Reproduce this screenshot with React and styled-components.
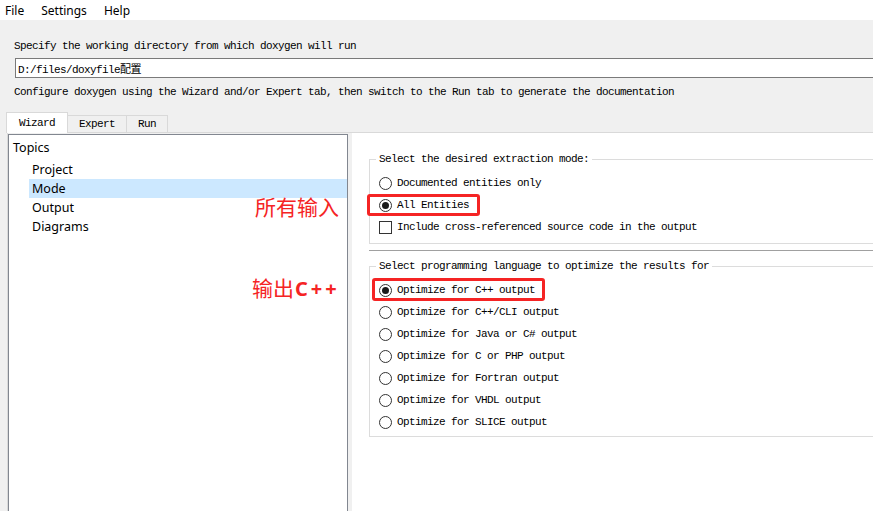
import React from 'react';
import styled, { createGlobalStyle } from 'styled-components';

const mono = `'Liberation Mono', 'Noto Sans CJK SC', monospace`;
const ui = `'Noto Sans', 'Noto Sans CJK SC', sans-serif`;

const GlobalStyle = createGlobalStyle`
  html, body {
    margin: 0;
    padding: 0;
    background: #f0f0f0;
    overflow: hidden;
  }
`;

const Window = styled.div`
  width: 873px;
  height: 511px;
  overflow: hidden;
  display: flex;
  flex-direction: column;
  background: #f0f0f0;
`;

const MenuBar = styled.nav`
  flex: none;
  height: 20px;
  background: #fff;
  display: flex;
  align-items: center;
  gap: 17px;
  padding-left: 5px;
  font: 12px ${ui};
  color: #000;
`;

const Header = styled.header`
  display: flex;
  flex-direction: column;
  padding: 19px 0 0 14px;
  font-family: ${mono};
  font-size: 11px;
  letter-spacing: -0.6px;
  color: #000;
`;

const Label = styled.div`
  height: 14px;
  line-height: 14px;
  white-space: nowrap;
  margin-top: ${(p) => p.$gap || 0}px;
`;

const PathField = styled.input`
  box-sizing: border-box;
  height: 20px;
  margin: 5px -30px 0 1px;
  padding: 0 2px;
  border: 1px solid #7a7a7a;
  background: #fff;
  font: inherit;
  letter-spacing: inherit;
  color: #000;
  outline: none;
`;

const TabBar = styled.div`
  display: flex;
  align-items: flex-end;
  height: 20px;
  margin: 14px 0 -1px 6px;
  position: relative;
  z-index: 1;
  font-family: ${mono};
  font-size: 11px;
  letter-spacing: -0.6px;
`;

const Tab = styled.div`
  box-sizing: border-box;
  height: ${(p) => (p.$active ? 21 : 18)}px;
  padding: 0 ${(p) => p.$pad}px;
  margin-left: ${(p) => (p.$first ? 0 : -1)}px;
  display: flex;
  align-items: center;
  justify-content: center;
  border: 1px solid #d9d9d9;
  border-bottom: ${(p) => (p.$active ? 'none' : '1px solid #d9d9d9')};
  background: ${(p) => (p.$active ? '#fff' : '#f0f0f0')};
  color: #000;
`;

const Pane = styled.div`
  flex: 1;
  display: flex;
  margin-left: 7px;
  border-top: 1px solid #d9d9d9;
  border-left: 1px solid #d9d9d9;
  min-height: 0;
`;

const Tree = styled.div`
  position: relative;
  box-sizing: border-box;
  flex: none;
  width: 340px;
  margin-top: 1px;
  padding-top: 3px;
  border: 1px solid #828790;
  border-bottom: none;
  background: #fff;
  font: 12.5px ${ui};
  color: #000;
`;

const TreeRoot = styled.div`
  height: 22px;
  line-height: 19px;
  padding-left: 4px;
`;

const TreeItem = styled.div`
  height: 19px;
  line-height: 19px;
  margin-left: 20px;
  padding-left: 3px;
  background: ${(p) => (p.$selected ? '#cce8ff' : 'transparent')};
`;

const Note = styled.span`
  position: absolute;
  left: ${(p) => p.$x}px;
  top: ${(p) => p.$y}px;
  font: 21px/24px 'Noto Sans CJK SC', sans-serif;
  color: #f52424;
  white-space: nowrap;
`;

const NoteLatin = styled.span`
  font-family: 'Noto Sans', sans-serif;
  font-weight: 700;
  font-size: 20px;
  letter-spacing: 3px;
  margin-left: 1px;
`;

const Splitter = styled.div`
  flex: none;
  width: 4px;
  background: #f0f0f0;
`;

const Page = styled.div`
  flex: 1;
  min-width: 0;
  overflow: hidden;
  background: #fff;
  padding: 19px 0 0 17px;
  font-family: ${mono};
  font-size: 11px;
  letter-spacing: -0.6px;
  color: #000;
`;

const Group = styled.fieldset`
  margin: ${(p) => p.$top || 0}px -30px 0 0;
  padding: 6px 0 ${(p) => p.$bottom}px 9px;
  border: 1px solid #dcdcdc;
  min-width: 0;
`;

const Legend = styled.legend`
  padding: 0 3px;
  margin-left: -3px;
  height: 14px;
  line-height: 14px;
  white-space: nowrap;
`;

const Separator = styled.div`
  height: 1px;
  margin: 6px -30px 0 0;
  background: #a0a0a0;
`;

const Option = styled.div`
  position: relative;
  height: 22px;
  display: flex;
  align-items: center;
  gap: 5px;
  white-space: nowrap;
`;

const Radio = styled.span`
  box-sizing: border-box;
  flex: none;
  width: 13px;
  height: 13px;
  border: 1px solid #333;
  border-radius: 50%;
  background: #fff;
  display: flex;
  align-items: center;
  justify-content: center;

  &::after {
    content: '';
    display: ${(p) => (p.$checked ? 'block' : 'none')};
    width: 7px;
    height: 7px;
    border-radius: 50%;
    background: #1a1a1a;
  }
`;

const Check = styled.span`
  box-sizing: border-box;
  flex: none;
  width: 13px;
  height: 13px;
  border: 1px solid #333;
  background: #fff;
`;

const Mark = styled.span`
  position: absolute;
  box-sizing: border-box;
  left: ${(p) => p.$left}px;
  top: ${(p) => p.$top}px;
  width: ${(p) => p.$width}px;
  height: ${(p) => p.$height}px;
  border: 3px solid #f52424;
  border-radius: 3px;
  pointer-events: none;
`;

const languages = [
  'Optimize for C++ output',
  'Optimize for C++/CLI output',
  'Optimize for Java or C# output',
  'Optimize for C or PHP output',
  'Optimize for Fortran output',
  'Optimize for VHDL output',
  'Optimize for SLICE output',
];

export default function App() {
  return (
    <Window>
      <GlobalStyle />
      <MenuBar>
        <span>File</span>
        <span>Settings</span>
        <span>Help</span>
      </MenuBar>

      <Header>
        <Label>Specify the working directory from which doxygen will run</Label>
        <PathField readOnly value="D:/files/doxyfile配置" />
        <Label $gap={7}>
          Configure doxygen using the Wizard and/or Expert tab, then switch to the Run tab to generate the documentation
        </Label>
      </Header>

      <TabBar>
        <Tab $active $first $pad={12}>Wizard</Tab>
        <Tab $pad={11}>Expert</Tab>
        <Tab $pad={11}>Run</Tab>
      </TabBar>

      <Pane>
        <Tree>
          <TreeRoot>Topics</TreeRoot>
          <TreeItem>Project</TreeItem>
          <TreeItem $selected>Mode</TreeItem>
          <TreeItem>Output</TreeItem>
          <TreeItem>Diagrams</TreeItem>
          <Note $x={246} $y={59}>所有输入</Note>
          <Note $x={243} $y={140}>
            输出<NoteLatin>C++</NoteLatin>
          </Note>
        </Tree>
        <Splitter />
        <Page>
          <Group $bottom={5}>
            <Legend>Select the desired extraction mode:</Legend>
            <Option>
              <Radio />
              Documented entities only
            </Option>
            <Option>
              <Mark $left={-12} $top={0} $width={113} $height={22} />
              <Radio $checked />
              All Entities
            </Option>
            <Option>
              <Check />
              Include cross-referenced source code in the output
            </Option>
          </Group>
          <Separator />
          <Group $top={8} $bottom={3}>
            <Legend>Select programming language to optimize the results for</Legend>
            {languages.map((lang, i) => (
              <Option key={lang}>
                {i === 0 && <Mark $left={-7} $top={-1} $width={173} $height={23} />}
                <Radio $checked={i === 0} />
                {lang}
              </Option>
            ))}
          </Group>
        </Page>
      </Pane>
    </Window>
  );
}
